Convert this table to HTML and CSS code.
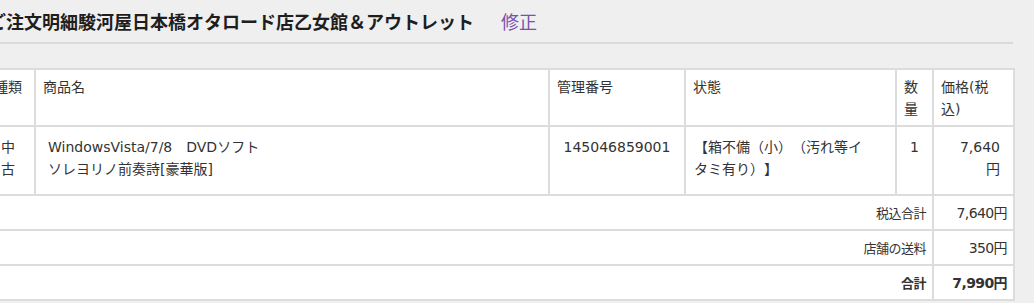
FILE: index.html
```html
<!DOCTYPE html>
<html lang="ja">
<head>
<meta charset="utf-8">
<title>ご注文明細</title>
<link rel="stylesheet" href="styles.css">
</head>
<body>
<div class="page">
  <div class="title-bar">
    <h1 class="title">ご注文明細駿河屋日本橋オタロード店乙女館＆アウトレット</h1>
    <a class="edit" href="#">修正</a>
  </div>
  <table class="order">
    <colgroup>
      <col class="c-kind">
      <col class="c-name">
      <col class="c-code">
      <col class="c-state">
      <col class="c-qty">
      <col class="c-price">
    </colgroup>
    <thead>
      <tr>
        <th>種類</th>
        <th>商品名</th>
        <th>管理番号</th>
        <th>状態</th>
        <th>数量</th>
        <th>価格(税込)</th>
      </tr>
    </thead>
    <tbody>
      <tr class="item">
        <td class="kind">中古</td>
        <td class="name">WindowsVista/7/8　DVDソフト<br>ソレヨリノ前奏詩[豪華版]</td>
        <td class="code">145046859001</td>
        <td class="state">【箱不備（小）（汚れ等イタミ有り）】</td>
        <td class="qty">1</td>
        <td class="price">7,640<span class="yen">円</span></td>
      </tr>
      <tr class="sum">
        <td colspan="5" class="label">税込合計</td>
        <td class="value">7,640円</td>
      </tr>
      <tr class="sum">
        <td colspan="5" class="label">店舗の送料</td>
        <td class="value">350円</td>
      </tr>
      <tr class="sum total">
        <td colspan="5" class="label">合計</td>
        <td class="value">7,990円</td>
      </tr>
    </tbody>
  </table>
</div>
</body>
</html>
```

FILE: styles.css
```css
* { box-sizing: border-box; }
html, body {
  margin: 0;
  padding: 0;
  background: #efefef;
  font-family: "DejaVu Sans", "Noto Sans CJK JP", sans-serif;
  color: #333;
  overflow: hidden;
  text-spacing-trim: space-all;
}
.page {
  margin-left: -15px;
  width: 1028px;
}
.title-bar {
  display: flex;
  align-items: center;
  gap: 27px;
  height: 44px;
  padding-left: 3px;
  border-bottom: 2px solid #dadada;
  margin-bottom: 24px;
}
.title {
  margin: 0;
  font-family: "Noto Sans CJK JP", sans-serif;
  font-size: 18px;
  font-weight: bold;
  color: #1e1e1e;
  line-height: 1;
}
.edit {
  font-family: "Noto Sans CJK JP", sans-serif;
  font-size: 18px;
  color: #7b4fae;
  text-decoration: none;
  line-height: 1;
}
.order {
  width: 1028px;
  border-collapse: collapse;
  background: #fff;
  table-layout: fixed;
  font-size: 14px;
  line-height: 22px;
}
.order th, .order td {
  border: 2px solid #dcdcdc;
}
.c-kind { width: 49px; }
.c-name { width: 514px; }
.c-code { width: 136px; }
.c-state { width: 211px; }
.c-qty { width: 37px; }
.c-price { width: 81px; }
.order th {
  font-weight: normal;
  text-align: left;
  vertical-align: top;
  padding: 6px 7px 5px;
  height: 57px;
}
.item td {
  vertical-align: top;
  padding: 9px 13px 11px;
  height: 69px;
}
.item .kind { padding-left: 14px; padding-right: 14px; }
.item .name { padding-left: 12px; }
.item .code { text-align: center; padding-left: 6px; padding-right: 6px; }
.item .state { padding-left: 8px; padding-right: 22px; }
.item .qty { text-align: center; padding-left: 4px; padding-right: 4px; }
.item .price { text-align: right; }
.yen { display: block; }
.sum td {
  height: 35px;
  padding: 0 6px;
  text-align: right;
  vertical-align: middle;
}
.sum .label { font-family: "Noto Sans CJK JP", sans-serif; font-size: 13px; letter-spacing: -0.5px; }
.sum .value { letter-spacing: -0.6px; }
.total td { font-weight: bold; }
```
